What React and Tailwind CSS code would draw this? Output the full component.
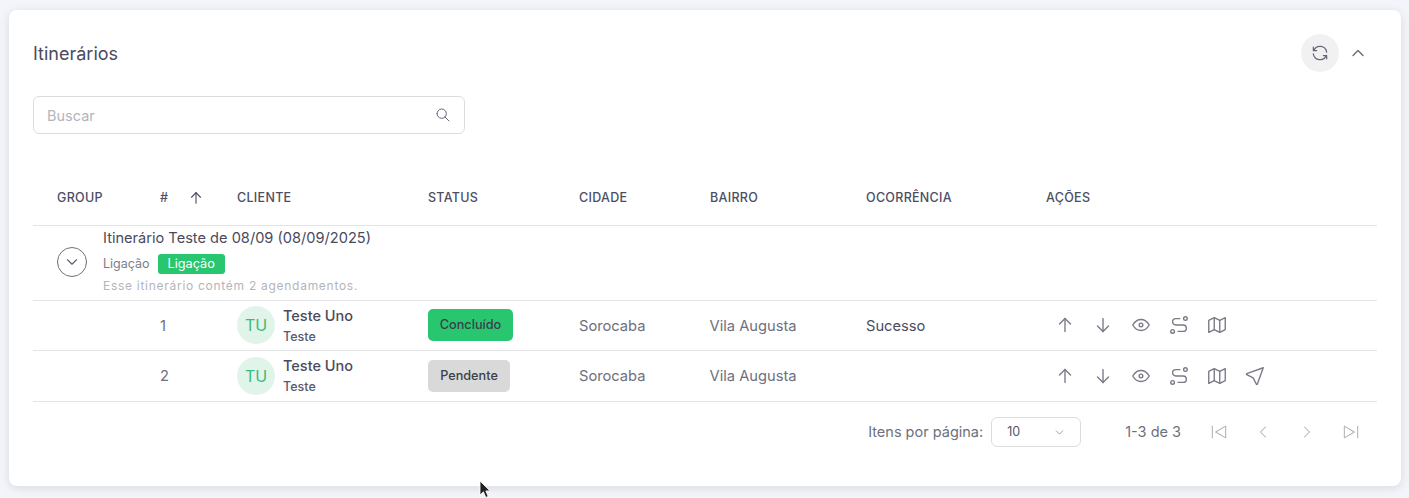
import {
  TbArrowDown,
  TbArrowUp,
  TbChevronDown,
  TbChevronLeft,
  TbChevronRight,
  TbChevronUp,
  TbEye,
  TbLocation,
  TbMap,
  TbPlayerSkipBack,
  TbPlayerSkipForward,
  TbRefresh,
  TbRoute,
  TbSearch,
} from 'react-icons/tb';

const columns = 'grid grid-cols-[127px_77px_191px_151px_131px_156px_180px_1fr] items-center';

const rows = [
  { id: 1, height: 'h-[50px]', boxNudge: 'mb-[1px]', textNudge: 'mt-[1px]', status: 'Concluído', statusClass: 'w-[85px] bg-[#28c76f]', occurrence: 'Sucesso', send: false },
  { id: 2, height: 'h-[51px]', boxNudge: '', textNudge: '', status: 'Pendente', statusClass: 'w-[82px] bg-[#d9d9d9]', occurrence: '', send: true },
];

function ActionIcons({ send, nudge }) {
  return (
    <div className={`flex items-center gap-[16px] pl-[8px] text-[#7a7a88] ${nudge}`}>
      <TbArrowUp size={22} strokeWidth={1.5} />
      <TbArrowDown size={22} strokeWidth={1.5} />
      <TbEye size={22} strokeWidth={1.5} />
      <TbRoute size={22} strokeWidth={1.5} />
      <TbMap size={22} strokeWidth={1.5} />
      {send && <TbLocation size={22} strokeWidth={1.5} />}
    </div>
  );
}

function Row({ row }) {
  return (
    <div className={`${columns} ${row.height} border-b border-[#e4e4e7] text-[14.7px] text-[#6f6f7d]`}>
      <div />
      <div className={row.textNudge}>{row.id}</div>
      <div className="flex items-center gap-[8px]">
        <div className={`flex size-[38px] items-center justify-center rounded-full bg-[#e0f4ea] text-[16px] text-[#3fb97c] ${row.boxNudge}`}>
          TU
        </div>
        <div className={row.textNudge}>
          <div className="text-[14.5px] leading-[20px] font-medium text-[#4a4a5e]">Teste Uno</div>
          <div className="mt-[1px] text-[12.5px] leading-[20px] font-medium text-[#5a5a6c]">Teste</div>
        </div>
      </div>
      <div>
        <div className={`flex h-[32px] items-center justify-center rounded-[5px] text-[12.7px] font-medium text-[#3a3f4a] ${row.statusClass} ${row.boxNudge}`}>
          {row.status}
        </div>
      </div>
      <div className={row.textNudge}>Sorocaba</div>
      <div className={`-ml-[0.5px] ${row.textNudge}`}>Vila Augusta</div>
      <div className={`text-[#4c4c60] ${row.textNudge}`}>{row.occurrence}</div>
      <ActionIcons send={row.send} nudge={row.boxNudge} />
    </div>
  );
}

export default function App() {
  return (
    <div className="relative h-[498px] overflow-hidden bg-[#f4f5fa] px-[9px] pt-[10px] font-['Inter',sans-serif]">
      <div className="h-[476px] w-[1392px] rounded-[8px] bg-white px-[24px] shadow-[0_2px_10px_rgba(76,78,100,0.16)]">
        <div className="flex h-[86px] items-center justify-between pr-[7px]">
          <h1 className="text-[18px] font-normal text-[#4a4a5e]">Itinerários</h1>
          <div className="flex items-center gap-[7px]">
            <button className="flex size-[38px] items-center justify-center rounded-full bg-[#f1f1f2] text-[#66667a]">
              <TbRefresh size={20} strokeWidth={1.5} />
            </button>
            <button className="flex size-[24px] items-center justify-center text-[#66667a]">
              <TbChevronUp size={20} strokeWidth={1.5} />
            </button>
          </div>
        </div>

        <div className="flex h-[38px] w-[432px] items-center justify-between rounded-[6px] border border-[#dcdcdf] px-[13px]">
          <span className="pt-[1px] text-[14.5px] text-[#b4b4bc]">Buscar</span>
          <TbSearch size={16} strokeWidth={1.5} className="text-[#66667a]" />
        </div>

        <div className="mt-[36px] w-[1344px]">
          <div className={`${columns} h-[56px] border-b border-[#e4e4e7] pt-[1px] text-[12.5px] font-medium tracking-[0.3px] text-[#4c4e64]`}>
            <div className="pl-[24px]">GROUP</div>
            <div className="flex items-center gap-[19px]">
              #
              <TbArrowUp size={18} strokeWidth={1.5} />
            </div>
            <div>CLIENTE</div>
            <div>STATUS</div>
            <div>CIDADE</div>
            <div>BAIRRO</div>
            <div>OCORRÊNCIA</div>
            <div>AÇÕES</div>
          </div>

          <div className="flex h-[75px] items-start border-b border-[#e4e4e7] pl-[24px]">
            <button className="mt-[21px] flex size-[30px] items-center justify-center rounded-full border border-[#6f6f7d] text-[#5f5f70]">
              <TbChevronDown size={18} strokeWidth={1.5} />
            </button>
            <div className="ml-[16px] pt-[1px]">
              <div className="text-[14.6px] leading-[22px] text-[#4a4a5e]">Itinerário Teste de 08/09 (08/09/2025)</div>
              <div className="mt-[5px] flex h-[20px] items-center gap-[8px] text-[12.5px] text-[#7c7c89]">
                Ligação
                <span className="rounded-[3px] bg-[#28c76f] px-[10px] text-[12.7px] leading-[20px] text-white">Ligação</span>
              </div>
              <div className="mt-[3px] text-[12px] leading-[18px] tracking-[0.72px] text-[#b4b4bc]">
                Esse itinerário contém 2 agendamentos.
              </div>
            </div>
          </div>

          {rows.map((row) => (
            <Row key={row.id} row={row} />
          ))}

          <div className="flex h-[60px] items-center justify-end pr-[16px] text-[14.5px] text-[#6f6f7d]">
            <span>Itens por página:</span>
            <div className="ml-[8px] flex h-[30px] w-[90px] items-center justify-between rounded-[6px] border border-[#dcdcdf] pr-[14px] pl-[15px] text-[12.5px] text-[#55556a]">
              10
              <TbChevronDown size={13} strokeWidth={1.5} className="text-[#8a8a96]" />
            </div>
            <span className="ml-[44px]">1-3 de 3</span>
            <div className="ml-[28px] flex items-center gap-[24px] text-[#b0b0b8]">
              <TbPlayerSkipBack size={20} strokeWidth={1.25} />
              <TbChevronLeft size={20} strokeWidth={1.25} />
              <TbChevronRight size={20} strokeWidth={1.25} />
              <TbPlayerSkipForward size={20} strokeWidth={1.25} />
            </div>
          </div>
        </div>
      </div>

      {/* mouse pointer captured in the screenshot */}
      <svg className="absolute top-[480px] left-[479px]" width="14" height="18" viewBox="0 0 14 18">
        <path d="M1 1v14l3.4-3.2 2.4 5.6 2.4-1-2.4-5.5H11z" fill="#222" stroke="#fff" strokeWidth="0.8" />
      </svg>
    </div>
  );
}
